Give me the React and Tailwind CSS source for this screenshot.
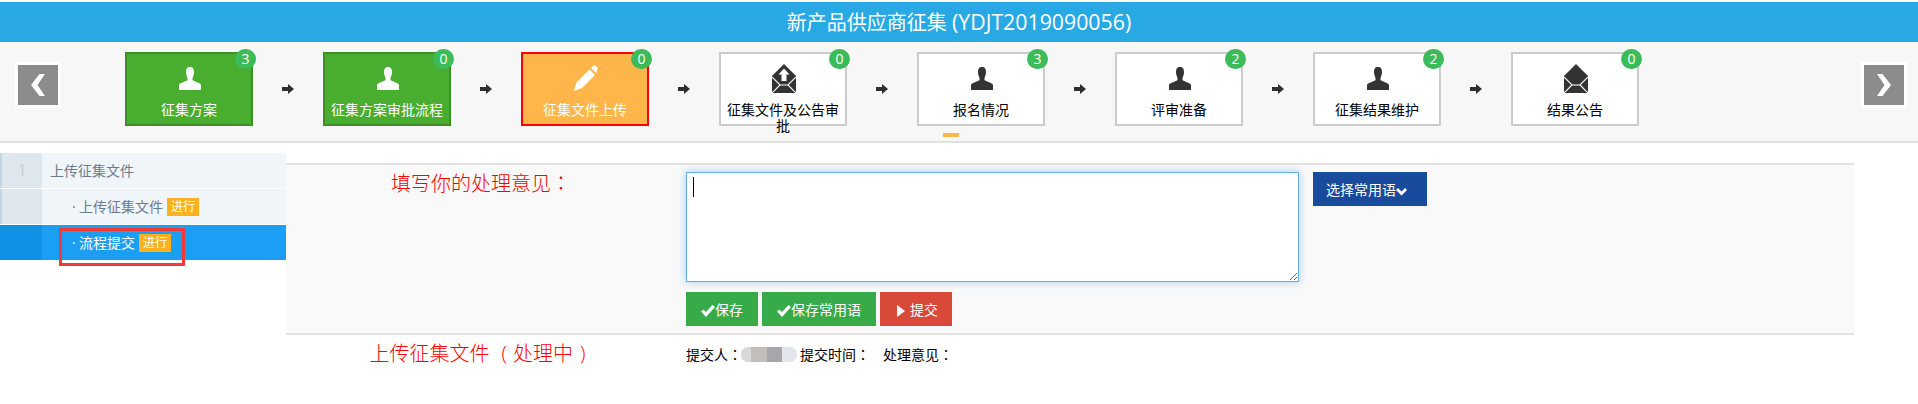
import React from "react";

const FONT = "font-['Open_Sans','Noto_Sans_CJK_SC',sans-serif]";

const Colon = () => <span className="font-['Noto_Sans_CJK_TC',sans-serif]">：</span>;

const User = ({ c }) => (
  <svg width="22" height="23" viewBox="0 0 22 23" className={c}>
    <path fill="currentColor" d="M11 0C8 0 7 2 7 5C7 8 8 9.500 8.500 11L8.500 13C8 14.500 0 15.500 0 18L0 23L22 23L22 18C22 15.500 14 14.500 13.500 13L13.500 11C14 9.500 15 8 15 5C15 2 14 0 11 0Z" />
  </svg>
);

const Pencil = () => (
  <svg width="24" height="26" viewBox="0 0 24 26" className="text-white">
    <path fill="currentColor" d="M0 26L2.500 17.500L15.500 4.500L21 10L8 23Z" />
    <path fill="currentColor" d="M17 3L19 1C20 0 21 0 22 1L23.200 2.300C24 3.200 24 4.200 23.200 5L22.300 8.500Z" />
  </svg>
);

const Mail = ({ up }) => (
  <svg width="24" height="29" viewBox="0 0 24 29">
    <path fill="#333" d="M12 0L24 12V29H0V12Z" />
    <path fill="none" stroke="#fff" strokeWidth="1.100" d="M0 13L8 21H16L24 13M0 29L8 21M24 29L16 21" />
    {up && <path fill="#fff" d="M12 4.500L17.500 10.500H14.500V17H9.500V10.500H6.500Z" />}
  </svg>
);

const Arrow = () => (
  <svg width="12" height="10" viewBox="0 0 12 10">
    <path fill="#2f2f2f" d="M0 3H6V0L12 5L6 10V7H0Z" />
  </svg>
);

const Check = () => (
  <svg width="14" height="12" viewBox="0 0 14 12" className="mt-[4px]">
    <path fill="#fff" d="M0 6.500L2.500 4.500L5 7L11.500 0L14 2L5 12Z" />
  </svg>
);

const Chevron = ({ right }) => (
  <svg width="16" height="22" viewBox="0 0 16 22">
    <path fill="#fff" d={right ? "M1 0H6.500L15 11L6.500 22H1L8.500 11Z" : "M15 0H9.500L1 11L9.500 22H15L7.500 11Z"} />
  </svg>
);

const steps = [
  { t: "征集方案", n: 3, k: "done", i: <User c="text-white" /> },
  { t: "征集方案审批流程", n: 0, k: "done", i: <User c="text-white" /> },
  { t: "征集文件上传", n: 0, k: "cur", i: <Pencil /> },
  { t: "征集文件及公告审批", n: 0, k: "todo", i: <Mail up /> },
  { t: "报名情况", n: 3, k: "todo", i: <User c="text-[#333]" />, mark: true },
  { t: "评审准备", n: 2, k: "todo", i: <User c="text-[#333]" /> },
  { t: "征集结果维护", n: 2, k: "todo", i: <User c="text-[#333]" /> },
  { t: "结果公告", n: 0, k: "todo", i: <Mail /> },
];

const boxStyles = {
  done: "bg-[#49ad2f] border-[#3f8f28] text-white",
  cur: "bg-[#feb64a] border-[#ff0000] text-white",
  todo: "bg-white border-[#cccccc] text-black",
};

const Step = ({ s }) => (
  <div className={`relative w-[128px] h-[74px] border-2 flex flex-col items-center ${boxStyles[s.k]}`}>
    <div className="h-[48px] pl-[2px] flex items-center justify-center shrink-0">{s.i}</div>
    <div className="text-[14px] leading-[16px] text-center w-full whitespace-normal">{s.t}</div>
    <span className="absolute top-[-5px] right-[-5px] w-[21px] h-[20px] rounded-full bg-[#3cbb5a] text-white text-[14px] leading-[20px] text-center">
      {s.n}
    </span>
    {s.mark && <span className="absolute left-[24px] top-[79px] w-[16px] h-[4px] bg-[#feb64a]" />}
  </div>
);

const Tag = () => (
  <span className="inline-block w-[32px] h-[18px] bg-[#fdb020] text-white text-[12px] leading-[18px] text-center">进行</span>
);

const Nav = ({ right }) => (
  <div className={`mt-[20px] w-[46px] h-[46px] bg-white flex items-center justify-center shrink-0 ${right ? "ml-auto mr-[11px]" : ""}`}>
    <div className="w-[40px] h-[40px] bg-[#8c8c8c] flex items-center justify-center">
      <Chevron right={right} />
    </div>
  </div>
);

const Btn = ({ bg, children, className = "" }) => (
  <button className={`h-[34px] flex items-center text-white text-[14px] ${bg} ${className}`}>{children}</button>
);

export default function App() {
  return (
    <div className={`${FONT} bg-white min-h-[404px] pt-[2px] text-[13px] text-black`}>
      <div className="h-[40px] bg-[#29a9e4] text-white text-[20px] leading-[40px] text-center">
        新产品供应商征集 <span className="text-[21.300px]">(YDJT2019090056)</span>
      </div>

      <div className="h-[101px] bg-[#f7f7f7] border-b-2 border-[#e2e2e2] flex pl-[15px]">
        <Nav />
        <div className="flex ml-[64px] pt-[10px]">
          {steps.map((s, i) => (
            <React.Fragment key={s.t}>
              {i > 0 && (
                <div className="w-[70px] h-[74px] flex items-center justify-center">
                  <Arrow />
                </div>
              )}
              <Step s={s} />
            </React.Fragment>
          ))}
        </div>
        <Nav right />
      </div>

      <div className="flex">
        <div className="relative w-[286px] mt-[10px] shrink-0 flex flex-col gap-[1px] text-[14px]">
          <div className="h-[35px] flex bg-[#f0f5f9] text-[#6b7b8c]">
            <div className="w-[42px] border-l-2 border-[#c3d5e0] bg-[#dfe7ee] text-[#c0d0dc] text-[16px] leading-[35px] text-center">1</div>
            <div className="pl-[8px] leading-[35px]">上传征集文件</div>
          </div>
          <div className="h-[35px] flex bg-[#f0f5f9] text-[#6b7b8c]">
            <div className="w-[42px] border-l-2 border-[#c3d5e0] bg-[#dfe7ee]" />
            <div className="pl-[30px] flex items-center gap-[4px]">
              <span className="w-[7px] -mr-[4px]">·</span>
              <span>上传征集文件</span>
              <Tag />
            </div>
          </div>
          <div className="h-[35px] flex bg-[#1a9ff5] text-white">
            <div className="w-[42px] bg-[#0f92e5]" />
            <div className="pl-[30px] flex items-center gap-[4px]">
              <span className="w-[7px] -mr-[4px]">·</span>
              <span>流程提交</span>
              <Tag />
            </div>
          </div>
          <div className="absolute left-[59px] top-[75px] w-[126px] h-[38px] border-[3px] border-[#f33a3a]" />
        </div>

        <div className="w-[1568px] mt-[20px] shrink-0">
          <div className="h-[172px] bg-[#f9f9f9] border-y-2 border-[#e2e2e2] flex">
            <div className="w-[400px] pr-[10px] text-center text-[20px] font-light leading-[36px] text-[#ff0000] shrink-0">填写你的处理意见<Colon /></div>
            <div className="pt-[7px]">
              <div className="flex items-start gap-[14px]">
                <div className="relative w-[613px] h-[110px]">
                  <textarea className="block w-[613px] h-[110px] bg-white border border-[#66afe9] shadow-[0_0_8px_rgba(102,175,233,0.6)] outline-none" />
                  <span className="absolute left-[7px] top-[5px] w-[1px] h-[20px] bg-black" />
                </div>
                <Btn bg="bg-[#1a4a9c]" className="w-[114px] pl-[13px]">
                  <span>选择常用语</span>
                  <svg width="11" height="10" viewBox="0 0 11 10" className="mt-[4px]">
                    <path fill="#fff" d="M0 4L2 2L5.500 5.500L9 2L11 4L5.500 9.500Z" />
                  </svg>
                </Btn>
              </div>
              <div className="flex gap-[4px] mt-[10px]">
                <Btn bg="bg-[#37ab4a]" className="w-[72px] pl-[15px]"><Check />保存</Btn>
                <Btn bg="bg-[#37ab4a]" className="w-[114px] pl-[15px]"><Check />保存常用语</Btn>
                <Btn bg="bg-[#d9493a]" className="w-[72px] pl-[17px] gap-[5px]">
                  <svg width="8" height="12" viewBox="0 0 8 12" className="mt-[3px]">
                    <path fill="#fff" d="M0 0L8 6L0 12Z" />
                  </svg>
                  提交
                </Btn>
              </div>
            </div>
          </div>
          <div className="flex">
            <div className="w-[400px] pr-[17px] text-center text-[20px] font-light leading-[38px] text-[#ff0000] shrink-0">
              上传征集文件<span className="ml-[12px]">(</span><span className="ml-[6px]">处理中</span><span className="ml-[7px]">)</span>
            </div>
            <div className="flex items-center h-[38px] text-[14px]">
              <span>提交人<Colon /></span>
              <span className="flex w-[56px] h-[15px] -ml-[1px] overflow-hidden rounded-[7px]">
                <span className="w-[10px] bg-[#d8d8d8]" />
                <span className="w-[16px] bg-[#c0bfbd]" />
                <span className="w-[15px] bg-[#a7a7a9]" />
                <span className="w-[15px] bg-[#e2e5e9]" />
              </span>
              <span className="ml-[3px]">提交时间<Colon /></span>
              <span className="ml-[13px]">处理意见<Colon /></span>
            </div>
          </div>
        </div>
      </div>
    </div>
  );
}
